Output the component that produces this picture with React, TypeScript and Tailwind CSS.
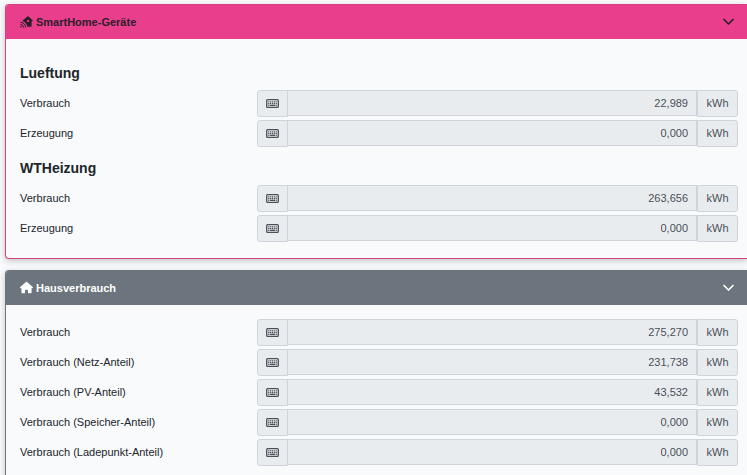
import { useId, useState } from 'react';
import type { ReactNode } from 'react';
import { FaHouse } from 'react-icons/fa6';

type Reading = { label: string; value: string };

const devices: { name: string; readings: Reading[] }[] = [
    {
        name: 'Lueftung',
        readings: [
            { label: 'Verbrauch', value: '22,989' },
            { label: 'Erzeugung', value: '0,000' },
        ],
    },
    {
        name: 'WTHeizung',
        readings: [
            { label: 'Verbrauch', value: '263,656' },
            { label: 'Erzeugung', value: '0,000' },
        ],
    },
];

const house: Reading[] = [
    { label: 'Verbrauch', value: '275,270' },
    { label: 'Verbrauch (Netz-Anteil)', value: '231,738' },
    { label: 'Verbrauch (PV-Anteil)', value: '43,532' },
    { label: 'Verbrauch (Speicher-Anteil)', value: '0,000' },
    { label: 'Verbrauch (Ladepunkt-Anteil)', value: '0,000' },
];

const Chevron = () => (
    <svg viewBox="0 0 11 11" className="size-[11px]" fill="none" stroke="currentColor" aria-hidden="true">
        <path d="M1 3.5 5.5 8 10 3.5" strokeWidth="1.7" strokeLinecap="round" strokeLinejoin="round" />
    </svg>
);

const Keyboard = () => (
    <svg viewBox="0 0 13 13" className="size-[13px]" fill="none" stroke="currentColor" aria-hidden="true">
        <rect x="0.7" y="2.7" width="11.6" height="7.6" rx="0.9" strokeWidth="1.3" />
        <path d="M2.2 4.9h8.6M2.2 6.6h8.6" strokeWidth="1.1" strokeDasharray="1.2 0.65" />
        <path d="M2.2 8.4h1.2M4.1 8.4h4.9M9.6 8.4h1.2" strokeWidth="1.1" />
    </svg>
);

// House with a small window and radio waves in the lower left corner
const HouseSignal = () => (
    <svg viewBox="0 0 13 13" className="size-[13px]" aria-hidden="true">
        <path
            fill="currentColor"
            fillRule="evenodd"
            d="M8 1 12.8 5.4 12.3 6.3H11.6V11Q11.6 11.8 10.8 11.8H7.4C6.9 9 5.2 7.1 2.6 6.2L2.5 5.7ZM7.2 5V6.9H9.1V5Z"
        />
        <g fill="none" stroke="currentColor" strokeWidth="1" strokeLinecap="round">
            <path d="M0.8 7.3A4.9 4.9 0 0 1 5.7 12.2M0.8 9.4A2.8 2.8 0 0 1 3.6 12.2" />
        </g>
        <circle cx="1" cy="11.8" r="0.8" fill="currentColor" />
    </svg>
);

const ReadingRow = ({ label, value }: Reading) => {
    const id = useId();

    return (
        <div className="grid grid-cols-[33fr_67fr] items-center">
            <label htmlFor={id} className="pb-0.5">{label}</label>
            <div className="flex h-[27px] min-w-0 text-[#495057]">
                <span className="flex w-[31px] shrink-0 items-center justify-center rounded-l-[3px] border border-[#ced4da] bg-[#e9ecef]">
                    <Keyboard />
                </span>
                <input
                    id={id}
                    type="text"
                    readOnly
                    value={value}
                    className="-ml-px h-[26px] min-w-0 flex-1 border border-[#ced4da] bg-[#e9ecef] px-2 pb-px text-right outline-none"
                />
                <span className="flex w-[41px] shrink-0 items-center justify-center rounded-r-[3px] border border-[#ced4da] bg-[#e9ecef] pb-0.5">
                    kWh
                </span>
            </div>
        </div>
    );
};

type CardProps = {
    title: string;
    icon: ReactNode;
    borderClass: string;
    headerClass: string;
    children: ReactNode;
};

const Card = ({ title, icon, borderClass, headerClass, children }: CardProps) => {
    const [open, setOpen] = useState(true);

    return (
        <section className={`rounded-l-[4px] border border-r-0 bg-[#f8fafc] shadow-[0_2px_6px_rgba(0,0,0,0.22)] ${borderClass}`}>
            <button
                type="button"
                aria-expanded={open}
                onClick={() => setOpen(!open)}
                className={`flex h-[34px] w-full items-center rounded-tl-[3px] pr-[13px] pb-px pl-[14px] text-left font-bold ${headerClass}`}
            >
                {icon}
                <span className="ml-[3px] flex-1">{title}</span>
                <Chevron />
            </button>
            {open && <div className="pt-[14px] pr-[9px] pb-4 pl-[14px]">{children}</div>}
        </section>
    );
};

const App = () => {
    return (
        <main className="flex min-h-screen flex-col gap-[11px] bg-[#f9fafc] pt-1 pl-[5px] font-['Liberation_Sans',Arial,sans-serif] text-[11px] leading-4 text-[#212529]">
            <Card
                title="SmartHome-Geräte"
                icon={<HouseSignal />}
                borderClass="border-[#d63f80]"
                headerClass="bg-[#e83e8c] text-[#2b1f2b]"
            >
                <div className="flex flex-col gap-3 pt-[11px]">
                    {devices.map((device) => (
                        <div key={device.name}>
                            <h2 className="mb-2 text-[14px] leading-[18px] font-bold">{device.name}</h2>
                            <div className="flex flex-col gap-[3px]">
                                {device.readings.map((reading) => (
                                    <ReadingRow key={reading.label} {...reading} />
                                ))}
                            </div>
                        </div>
                    ))}
                </div>
            </Card>

            <Card
                title="Hausverbrauch"
                icon={<FaHouse className="size-[13px]" />}
                borderClass="border-[#6c757d]"
                headerClass="bg-[#6c757d] text-white"
            >
                <div className="flex flex-col gap-[3px]">
                    {house.map((reading) => (
                        <ReadingRow key={reading.label} {...reading} />
                    ))}
                </div>
            </Card>
        </main>
    );
};

export default App;
